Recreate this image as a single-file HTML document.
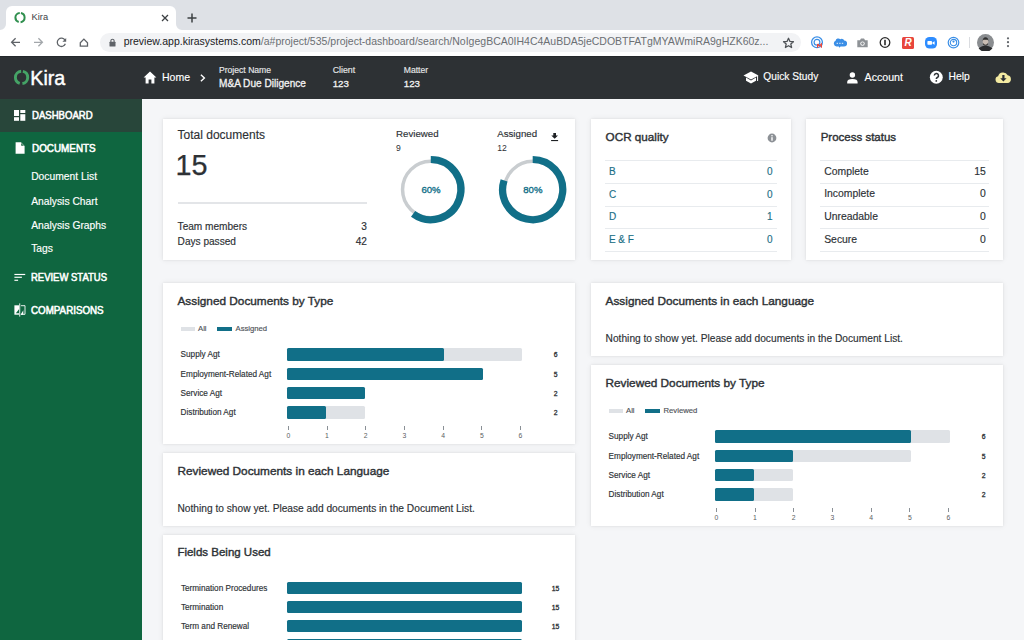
<!DOCTYPE html>
<html><head><meta charset="utf-8">
<style>
*{box-sizing:border-box;margin:0;padding:0}
html,body{width:1024px;height:640px;overflow:hidden;background:#f5f6f8;font-family:"Liberation Sans",sans-serif;color:#2d3135}
.abs{position:absolute}
.t{position:absolute;white-space:nowrap;line-height:1;-webkit-text-stroke:0.15px currentColor}
.card{position:absolute;background:#fff;box-shadow:0 0 6px rgba(0,0,0,.07),0 0 2px rgba(0,0,0,.08)}
</style></head><body>
<div class="abs" style="left:0px;top:0px;width:1024px;height:30px;background:#dee1e6;"></div>
<div class="abs" style="left:6px;top:6px;width:170px;height:24px;background:#fff;border-radius:6px 6px 0 0"></div>
<svg class="abs" style="left:0;top:24px" width="6" height="6"><path d="M0 6 L6 6 L6 0 A6 6 0 0 1 0 6Z" fill="#fff"/></svg>
<svg class="abs" style="left:176px;top:24px" width="6" height="6"><path d="M0 0 L0 6 L6 6 A6 6 0 0 1 0 0Z" fill="#fff"/></svg>
<svg class="abs" style="left:13px;top:11px" width="14" height="14" viewBox="0 0 14 14"><circle cx="7" cy="6.6" r="4.6" fill="none" stroke="#2f8f4e" stroke-width="2" stroke-dasharray="12.5 1.95" stroke-dashoffset="-0.97" transform="rotate(-90 7 6.6)"/></svg>
<div class="t" style="left:31.60px;top:12.89px;font-size:9.3px;font-weight:400;color:#3c4043;-webkit-text-stroke:0">Kira</div>
<svg class="abs" style="left:160px;top:13px" width="10" height="10" viewBox="0 0 10 10"><path d="M2 2L8 8M8 2L2 8" stroke="#3c4043" stroke-width="1.3"/></svg>
<svg class="abs" style="left:186px;top:12px" width="12" height="12" viewBox="0 0 12 12"><path d="M6 1.5V10.5M1.5 6H10.5" stroke="#3c4043" stroke-width="1.5"/></svg>
<div class="abs" style="left:0px;top:30px;width:1024px;height:26px;background:#fff;"></div>
<div class="abs" style="left:100px;top:33px;width:701px;height:18.7px;background:#f2f3f5;border-radius:9.4px"></div>
<svg class="abs" style="left:0;top:0" width="100" height="56"><path d="M20 42.3H11.8M15.6 38.3L11.6 42.3L15.6 46.3" stroke="#5f6368" stroke-width="1.3" fill="none"/><path d="M34 42.3H42.2M38.4 38.3L42.4 42.3L38.4 46.3" stroke="#a3a7ab" stroke-width="1.3" fill="none"/><path d="M65 40.2A4.15 4.15 0 1 0 65.35 43.7" stroke="#5f6368" stroke-width="1.3" fill="none"/><path d="M66.2 37.9V41.7H62.4Z" fill="#5f6368"/><path d="M80.3 42.8L83.9 39.1L87.5 42.8V46.2H80.3Z" stroke="#5f6368" stroke-width="1.3" fill="none" stroke-linejoin="miter"/></svg>
<svg class="abs" style="left:109px;top:38px" width="7" height="9" viewBox="0 0 7 9"><path d="M1.9 4V2.8A1.6 1.6 0 0 1 5.1 2.8V4" stroke="#5f6368" stroke-width="1.1" fill="none"/><rect x="0.5" y="3.7" width="6" height="4.8" rx="0.5" fill="#5f6368"/></svg>
<div class="t" style="left:123.70px;top:36.48px;font-size:10.5px;font-weight:400;color:#6b6f73;-webkit-text-stroke:0"><span style="color:#202124">preview.app.kirasystems.com</span>/a#project/535/project-dashboard/search/NoIgegBCA0IH4C4AuBDA5jeCDOBTFATgMYAWmiRA9gHZK60z...</div>
<svg class="abs" style="left:782px;top:37px" width="13" height="12" viewBox="0 0 24 22"><path d="M12 2.2l2.7 5.9 6.4.6-4.8 4.3 1.4 6.3L12 16l-5.7 3.3 1.4-6.3-4.8-4.3 6.4-.6z" stroke="#4f5357" stroke-width="2.4" fill="none" stroke-linejoin="round"/></svg>
<svg class="abs" style="left:810px;top:36px" width="14" height="13" viewBox="0 0 14 13"><circle cx="7" cy="6.3" r="5.4" fill="none" stroke="#3a8ee6" stroke-width="1.3"/><circle cx="7" cy="6.3" r="2.9" fill="none" stroke="#3a8ee6" stroke-width="1.2"/><path d="M7.6 8V11.7M7.6 8L9.5 10L11.4 8V11.7" stroke="#e8453c" stroke-width="1.2" fill="none"/></svg>
<svg class="abs" style="left:833px;top:37px" width="14" height="11" viewBox="0 0 14 11"><path d="M3.5 9.5A3 3 0 0 1 2.6 3.8 2.8 2.8 0 0 1 7.3 2.2 2.7 2.7 0 0 1 11.2 3.5 3 3 0 0 1 11 9.5H7.5L6.5 10.8 5.8 9.5Z" fill="#3a8ee6"/><path d="M3.6 6.3H5M6.2 6.3H7.6M8.8 6.3H10.2" stroke="#fff" stroke-width="0.9"/></svg>
<svg class="abs" style="left:857px;top:38px" width="11" height="10" viewBox="0 0 11 10"><path d="M0.3 2.2H2.9L4 0.5H7L8.1 2.2H10.7V9.3H0.3Z" fill="#8e9296"/><circle cx="5.5" cy="5.6" r="2.2" fill="#fff"/><circle cx="5.5" cy="5.6" r="1.3" fill="#8e9296"/></svg>
<svg class="abs" style="left:879px;top:37px" width="12" height="11" viewBox="0 0 12 11"><circle cx="6" cy="5.5" r="4.8" fill="none" stroke="#2b2b2b" stroke-width="1.3"/><rect x="5.2" y="2.8" width="1.6" height="5.4" fill="#2b2b2b"/></svg>
<div class="abs" style="left:902px;top:37px;width:12px;height:11.5px;background:#e8453c;border-radius:1.5px;color:#fff;font:italic 700 10px/11.5px 'Liberation Sans';text-align:center">R</div>
<svg class="abs" style="left:925px;top:37px" width="12" height="12" viewBox="0 0 12 12"><rect x="0" y="0" width="12" height="11.5" rx="4.5" fill="#2d8cff"/><rect x="2.4" y="4" width="4.6" height="3.8" rx="0.7" fill="#fff"/><path d="M7.4 5.4L9.6 4.2V7.7L7.4 6.5Z" fill="#fff"/></svg>
<svg class="abs" style="left:947px;top:36px" width="13" height="13" viewBox="0 0 13 13"><circle cx="6.5" cy="6.6" r="5.3" fill="none" stroke="#3a8ee6" stroke-width="1.2"/><circle cx="6.5" cy="6.6" r="3.2" fill="none" stroke="#3a8ee6" stroke-width="1.1"/><circle cx="6.5" cy="5.6" r="1.1" fill="#3a8ee6"/></svg>
<div class="abs" style="left:969px;top:37px;width:1px;height:11px;background:#dadce0;"></div>
<svg class="abs" style="left:977px;top:34px" width="17" height="17" viewBox="0 0 16 16"><circle cx="8" cy="8" r="8" fill="#8a8d90"/><path d="M1.5 13.5Q8 8 14.5 13.5A8 8 0 0 1 1.5 13.5Z" fill="#2a2c2e"/><ellipse cx="8" cy="7.3" rx="2.6" ry="3.3" fill="#c9bdb3"/><path d="M5.3 6.5Q5.5 3 8 3Q10.6 3 10.7 6.5L10 5.4H6Z" fill="#2f2f2f"/><path d="M5.6 8.5Q8 11.8 10.4 8.5V9.8Q8 12.2 5.6 9.8Z" fill="#3a3a3a"/></svg>
<svg class="abs" style="left:1005px;top:36px" width="6" height="13" viewBox="0 0 6 13"><circle cx="3" cy="2.3" r="1.1" fill="#5f6368"/><circle cx="3" cy="6.2" r="1.1" fill="#5f6368"/><circle cx="3" cy="10.1" r="1.1" fill="#5f6368"/></svg>
<div class="abs" style="left:0px;top:56px;width:1024px;height:43px;background:#2d3134;"></div>
<div class="abs" style="left:0px;top:56px;width:1024px;height:1px;background:#24282b;"></div>
<svg class="abs" style="left:13px;top:69px" width="17" height="17" viewBox="0 0 17 17"><circle cx="8.55" cy="8.4" r="6.15" fill="none" stroke="#45a366" stroke-width="2.9" stroke-dasharray="16.52 2.8" stroke-dashoffset="-1.4" transform="rotate(-90 8.55 8.4)"/></svg>
<div class="t" style="left:30.30px;top:68.66px;font-size:19.7px;font-weight:400;color:#fff;-webkit-text-stroke:0.4px #fff">Kira</div>
<svg class="abs" style="left:143px;top:71px" width="14" height="13" viewBox="0 0 14 13"><path d="M7 0.6L0.6 6.4H2.6V12.4H5.6V8.6H8.4V12.4H11.4V6.4H13.4Z" fill="#fff"/></svg>
<div class="t" style="left:162.00px;top:72.08px;font-size:10.5px;font-weight:400;color:#fff;">Home</div>
<svg class="abs" style="left:199px;top:73px" width="8" height="10" viewBox="0 0 8 10"><path d="M1.9 1.7L5.4 5L1.9 8.3" stroke="#fff" stroke-width="1.4" fill="none"/></svg>
<div class="t" style="left:219.00px;top:65.89px;font-size:8.6px;font-weight:400;color:#e6e7e8;">Project Name</div>
<div class="t" style="left:219.00px;top:79.32px;font-size:10.1px;font-weight:400;color:#f2f2f2;-webkit-text-stroke:0.3px #f2f2f2">M&amp;A Due Diligence</div>
<div class="t" style="left:332.70px;top:65.82px;font-size:8.8px;font-weight:400;color:#e6e7e8;">Client</div>
<div class="t" style="left:332.70px;top:79.45px;font-size:9.7px;font-weight:400;color:#f2f2f2;-webkit-text-stroke:0.3px #f2f2f2">123</div>
<div class="t" style="left:403.80px;top:65.99px;font-size:8.6px;font-weight:400;color:#e6e7e8;">Matter</div>
<div class="t" style="left:403.80px;top:79.45px;font-size:9.7px;font-weight:400;color:#f2f2f2;-webkit-text-stroke:0.3px #f2f2f2">123</div>
<svg class="abs" style="left:743px;top:71px" width="16" height="13" viewBox="0 0 16 13"><path d="M8 0.5L0.5 4.5L8 8.5L15.5 4.5Z" fill="#fff"/><path d="M3 6.6V9.7L8 12.5L13 9.7V6.6L8 9.4Z" fill="#fff"/><path d="M14.6 5V10" stroke="#fff" stroke-width="1"/></svg>
<div class="t" style="left:763.30px;top:72.03px;font-size:10.2px;font-weight:400;color:#fff;">Quick Study</div>
<svg class="abs" style="left:846px;top:72px" width="13" height="12" viewBox="0 0 13 12"><circle cx="6.4" cy="3" r="2.7" fill="#fff"/><path d="M1.2 11.4V10.1Q1.2 7.1 6.4 7.1Q11.6 7.1 11.6 10.1V11.4Z" fill="#fff"/></svg>
<div class="t" style="left:864.60px;top:71.89px;font-size:10.6px;font-weight:400;color:#fff;">Account</div>
<svg class="abs" style="left:929px;top:70px" width="15" height="15" viewBox="0 0 15 15"><circle cx="7.3" cy="7.3" r="6.45" fill="#fff"/><path d="M5.3 5.6A2.1 2.1 0 1 1 8.3 7.5C7.6 7.9 7.3 8.2 7.3 9.1" stroke="#2d3135" stroke-width="1.5" fill="none"/><circle cx="7.3" cy="10.9" r="0.9" fill="#2d3135"/></svg>
<div class="t" style="left:948.60px;top:72.34px;font-size:10.3px;font-weight:400;color:#fff;">Help</div>
<svg class="abs" style="left:995px;top:71px" width="17" height="13" viewBox="0 0 17 13"><path d="M4 12A3.4 3.4 0 0 1 3.1 5.3 5.2 5.2 0 0 1 12.7 4.3 3.9 3.9 0 0 1 12.6 12Z" fill="#f4eba2"/><path d="M7.3 4H9.5V7.3H11.6L8.4 10.4L5.2 7.3H7.3Z" fill="#2d3135"/></svg>
<div class="abs" style="left:0px;top:99px;width:142px;height:541px;background:#0f6640;"></div>
<div class="abs" style="left:0px;top:99px;width:142px;height:33px;background:#28463a;"></div>
<svg class="abs" style="left:14px;top:110px" width="12" height="11" viewBox="0 0 12 11"><rect x="0" y="0" width="5" height="6" fill="#fff"/><rect x="6.3" y="0" width="5" height="3" fill="#fff"/><rect x="0" y="7.2" width="5" height="3.6" fill="#fff"/><rect x="6.3" y="4.2" width="5" height="6.6" fill="#fff"/></svg>
<div class="t" style="left:31.70px;top:111.05px;font-size:10.3px;font-weight:400;color:#fff;-webkit-text-stroke:0.55px #fff;transform:scaleX(0.93);transform-origin:0 0">DASHBOARD</div>
<svg class="abs" style="left:15px;top:142px" width="10" height="12" viewBox="0 0 10 12"><path d="M0.6 0.3H6L9.6 3.9V11.7H0.6Z" fill="#fff"/><path d="M6.2 0.9V3.7H9" fill="#1f6b46"/></svg>
<div class="t" style="left:31.70px;top:143.84px;font-size:10.3px;font-weight:400;color:#fff;-webkit-text-stroke:0.55px #fff;transform:scaleX(0.96);transform-origin:0 0">DOCUMENTS</div>
<div class="t" style="left:31.20px;top:171.84px;font-size:10.3px;font-weight:400;color:#fff;">Document List</div>
<div class="t" style="left:31.20px;top:196.55px;font-size:10.3px;font-weight:400;color:#fff;">Analysis Chart</div>
<div class="t" style="left:31.20px;top:220.55px;font-size:10.3px;font-weight:400;color:#fff;">Analysis Graphs</div>
<div class="t" style="left:31.20px;top:244.44px;font-size:10.3px;font-weight:400;color:#fff;">Tags</div>
<svg class="abs" style="left:14px;top:273px" width="12" height="9" viewBox="0 0 12 9"><rect x="0.4" y="0.9" width="10.8" height="1.15" fill="#fff"/><rect x="0.4" y="3.7" width="7.5" height="1.15" fill="#fff"/><rect x="0.4" y="6.7" width="3.7" height="1.15" fill="#fff"/></svg>
<div class="t" style="left:31.20px;top:273.44px;font-size:10.3px;font-weight:400;color:#fff;-webkit-text-stroke:0.55px #fff;transform:scaleX(0.92);transform-origin:0 0">REVIEW STATUS</div>
<svg class="abs" style="left:14px;top:303px" width="12" height="14" viewBox="0 0 12 14"><path d="M0.4 2.3H5V11.7H0.4Z" fill="#fff"/><path d="M1.8 10.3L5 6.2V10.3Z" fill="#0f6640"/><rect x="5.3" y="0.4" width="0.9" height="13.2" fill="#fff"/><path d="M6.9 2.7H11V11.3H6.9" fill="none" stroke="#fff" stroke-width="0.9"/><path d="M6.6 11.7L9.3 7.2V11.7Z" fill="#fff"/></svg>
<div class="t" style="left:31.20px;top:306.05px;font-size:10.3px;font-weight:400;color:#fff;-webkit-text-stroke:0.55px #fff;transform:scaleX(0.95);transform-origin:0 0">COMPARISONS</div>
<div class="abs" style="left:142px;top:99px;width:882px;height:541px;background:#f5f6f8;"></div>
<div class="card" style="left:163px;top:119px;width:412px;height:141px"></div>
<div class="card" style="left:591px;top:119px;width:200px;height:141px"></div>
<div class="card" style="left:806px;top:119px;width:197px;height:141px"></div>
<div class="card" style="left:163px;top:283px;width:412px;height:161px"></div>
<div class="card" style="left:591px;top:283px;width:412px;height:73px"></div>
<div class="card" style="left:591px;top:365px;width:412px;height:161px"></div>
<div class="card" style="left:163px;top:453px;width:412px;height:73px"></div>
<div class="card" style="left:163px;top:535px;width:412px;height:120px"></div>
<div class="t" style="left:177.60px;top:128.70px;font-size:12px;font-weight:400;color:#2d3135;">Total documents</div>
<div class="t" style="left:175.50px;top:150.52px;font-size:28.8px;font-weight:400;color:#2d3135;-webkit-text-stroke:0.25px #2d3135">15</div>
<div class="abs" style="left:177.6px;top:202px;width:189.3px;height:2px;background:#e3e5e8;"></div>
<div class="t" style="left:177.60px;top:221.91px;font-size:10.1px;font-weight:400;color:#2d3135;">Team members</div>
<div class="t" style="right:657.10px;top:221.91px;font-size:10.1px;font-weight:400;color:#2d3135;">3</div>
<div class="t" style="left:177.60px;top:236.91px;font-size:10.1px;font-weight:400;color:#2d3135;">Days passed</div>
<div class="t" style="right:657.10px;top:236.91px;font-size:10.1px;font-weight:400;color:#2d3135;">42</div>
<div class="t" style="left:396.00px;top:129.06px;font-size:9.7px;font-weight:400;color:#2d3135;">Reviewed</div>
<div class="t" style="left:396.00px;top:143.69px;font-size:8.6px;font-weight:400;color:#2d3135;-webkit-text-stroke:0">9</div>
<div class="t" style="left:497.20px;top:129.06px;font-size:9.7px;font-weight:400;color:#2d3135;">Assigned</div>
<div class="t" style="left:497.20px;top:143.69px;font-size:8.6px;font-weight:400;color:#2d3135;-webkit-text-stroke:0">12</div>
<svg class="abs" style="left:550px;top:132px" width="9" height="10" viewBox="0 0 9 10"><path d="M3.3 1H6V3.4H8L4.65 6.8L1.3 3.4H3.3Z" fill="#1e2124"/><rect x="1.1" y="8" width="7" height="1.1" fill="#1e2124"/></svg>
<svg class="abs" style="left:0;top:0" width="1024" height="640"><circle cx="430.8" cy="189.6" r="28.25" fill="none" stroke="#c9cdd0" stroke-width="3.5"/><path d="M430.8 159.5 A30.1 30.1 0 1 1 413.11 213.95" fill="none" stroke="#116f88" stroke-width="7.2"/></svg>
<svg class="abs" style="left:0;top:0" width="1024" height="640"><circle cx="532.7" cy="189.6" r="28.25" fill="none" stroke="#c9cdd0" stroke-width="3.5"/><path d="M532.7 159.5 A30.1 30.1 0 1 1 504.07 180.30" fill="none" stroke="#116f88" stroke-width="7.2"/></svg>
<div class="t" style="left:231.00px;width:400px;text-align:center;top:184.94px;font-size:9.6px;font-weight:400;color:#116f88;-webkit-text-stroke:0.35px #116f88">60%</div>
<div class="t" style="left:332.90px;width:400px;text-align:center;top:184.94px;font-size:9.6px;font-weight:400;color:#116f88;-webkit-text-stroke:0.35px #116f88">80%</div>
<div class="t" style="left:605.60px;top:131.46px;font-size:11.7px;font-weight:400;color:#2d3135;-webkit-text-stroke:0.4px #2d3135">OCR quality</div>
<svg class="abs" style="left:767px;top:133px" width="10" height="10" viewBox="0 0 10 10"><circle cx="5" cy="5" r="4.4" fill="#8d9196"/><rect x="4.3" y="4.2" width="1.4" height="3.5" fill="#fff"/><circle cx="5" cy="2.8" r="0.8" fill="#fff"/></svg>
<div class="abs" style="left:605px;top:160px;width:171.7px;height:1px;background:#e8ebee;"></div>
<div class="abs" style="left:820px;top:160px;width:169px;height:1px;background:#e8ebee;"></div>
<div class="abs" style="left:605px;top:183px;width:171.7px;height:1px;background:#e8ebee;"></div>
<div class="abs" style="left:820px;top:183px;width:169px;height:1px;background:#e8ebee;"></div>
<div class="abs" style="left:605px;top:205.5px;width:171.7px;height:1px;background:#e8ebee;"></div>
<div class="abs" style="left:820px;top:205.5px;width:169px;height:1px;background:#e8ebee;"></div>
<div class="abs" style="left:605px;top:228.3px;width:171.7px;height:1px;background:#e8ebee;"></div>
<div class="abs" style="left:820px;top:228.3px;width:169px;height:1px;background:#e8ebee;"></div>
<div class="abs" style="left:605px;top:251px;width:171.7px;height:1px;background:#e8ebee;"></div>
<div class="abs" style="left:820px;top:251px;width:169px;height:1px;background:#e8ebee;"></div>
<div class="t" style="left:820.70px;top:131.62px;font-size:11.5px;font-weight:400;color:#2d3135;-webkit-text-stroke:0.4px #2d3135">Process status</div>
<div class="t" style="left:608.90px;top:167.00px;font-size:10px;font-weight:400;color:#1b6f86;">B</div>
<div class="t" style="right:251.50px;top:167.00px;font-size:10px;font-weight:400;color:#1b6f86;">0</div>
<div class="t" style="left:608.90px;top:189.70px;font-size:10px;font-weight:400;color:#1b6f86;">C</div>
<div class="t" style="right:251.50px;top:189.70px;font-size:10px;font-weight:400;color:#1b6f86;">0</div>
<div class="t" style="left:608.90px;top:212.40px;font-size:10px;font-weight:400;color:#1b6f86;">D</div>
<div class="t" style="right:251.50px;top:212.40px;font-size:10px;font-weight:400;color:#1b6f86;">1</div>
<div class="t" style="left:608.90px;top:235.10px;font-size:10px;font-weight:400;color:#1b6f86;">E &amp; F</div>
<div class="t" style="right:251.50px;top:235.10px;font-size:10px;font-weight:400;color:#1b6f86;">0</div>
<div class="t" style="left:824.20px;top:166.66px;font-size:10.4px;font-weight:400;color:#2d3135;">Complete</div>
<div class="t" style="right:38.20px;top:166.66px;font-size:10.4px;font-weight:400;color:#2d3135;">15</div>
<div class="t" style="left:824.20px;top:189.36px;font-size:10.4px;font-weight:400;color:#2d3135;">Incomplete</div>
<div class="t" style="right:38.20px;top:189.36px;font-size:10.4px;font-weight:400;color:#2d3135;">0</div>
<div class="t" style="left:824.20px;top:212.06px;font-size:10.4px;font-weight:400;color:#2d3135;">Unreadable</div>
<div class="t" style="right:38.20px;top:212.06px;font-size:10.4px;font-weight:400;color:#2d3135;">0</div>
<div class="t" style="left:824.20px;top:234.76px;font-size:10.4px;font-weight:400;color:#2d3135;">Secure</div>
<div class="t" style="right:38.20px;top:234.76px;font-size:10.4px;font-weight:400;color:#2d3135;">0</div>
<div class="t" style="left:177.50px;top:295.77px;font-size:11.8px;font-weight:400;color:#2d3135;-webkit-text-stroke:0.4px #2d3135">Assigned Documents by Type</div>
<div class="abs" style="left:180.6px;top:327px;width:14.2px;height:4px;background:#dfe2e6;"></div>
<div class="t" style="left:198.00px;top:325.25px;font-size:7.7px;font-weight:400;color:#4e5358;">All</div>
<div class="abs" style="left:217.2px;top:327px;width:14.4px;height:4px;background:#116f88;"></div>
<div class="t" style="left:235.50px;top:325.25px;font-size:7.7px;font-weight:400;color:#4e5358;">Assigned</div>
<div class="t" style="left:180.60px;top:351.33px;font-size:8.2px;font-weight:400;color:#2d3135;">Supply Agt</div>
<div class="abs" style="left:287px;top:348.4px;width:235.2px;height:12.5px;background:#dfe2e6;border-radius:1.5px"></div>
<div class="abs" style="left:287px;top:348.4px;width:156.8px;height:12.5px;background:#116f88;border-radius:1.5px"></div>
<div class="t" style="left:355.60px;width:400px;text-align:center;top:352.42px;font-size:6.8px;font-weight:400;color:#2d3135;-webkit-text-stroke:0.3px #2d3135">6</div>
<div class="t" style="left:180.60px;top:370.53px;font-size:8.2px;font-weight:400;color:#2d3135;">Employment-Related Agt</div>
<div class="abs" style="left:287px;top:367.6px;width:196.0px;height:12.5px;background:#dfe2e6;border-radius:1.5px"></div>
<div class="abs" style="left:287px;top:367.6px;width:196.0px;height:12.5px;background:#116f88;border-radius:1.5px"></div>
<div class="t" style="left:355.60px;width:400px;text-align:center;top:371.62px;font-size:6.8px;font-weight:400;color:#2d3135;-webkit-text-stroke:0.3px #2d3135">5</div>
<div class="t" style="left:180.60px;top:389.73px;font-size:8.2px;font-weight:400;color:#2d3135;">Service Agt</div>
<div class="abs" style="left:287px;top:386.8px;width:78.4px;height:12.5px;background:#dfe2e6;border-radius:1.5px"></div>
<div class="abs" style="left:287px;top:386.8px;width:78.4px;height:12.5px;background:#116f88;border-radius:1.5px"></div>
<div class="t" style="left:355.60px;width:400px;text-align:center;top:390.82px;font-size:6.8px;font-weight:400;color:#2d3135;-webkit-text-stroke:0.3px #2d3135">2</div>
<div class="t" style="left:180.60px;top:408.93px;font-size:8.2px;font-weight:400;color:#2d3135;">Distribution Agt</div>
<div class="abs" style="left:287px;top:406.0px;width:78.4px;height:12.5px;background:#dfe2e6;border-radius:1.5px"></div>
<div class="abs" style="left:287px;top:406.0px;width:39.2px;height:12.5px;background:#116f88;border-radius:1.5px"></div>
<div class="t" style="left:355.60px;width:400px;text-align:center;top:410.02px;font-size:6.8px;font-weight:400;color:#2d3135;-webkit-text-stroke:0.3px #2d3135">2</div>
<div class="abs" style="left:287.9px;top:425.79999999999995px;width:0.8px;height:4px;background:#8a9096;"></div>
<div class="t" style="left:88.30px;width:400px;text-align:center;top:432.92px;font-size:6.8px;font-weight:400;color:#5a5e62;-webkit-text-stroke:0">0</div>
<div class="abs" style="left:326.6px;top:425.79999999999995px;width:0.8px;height:4px;background:#8a9096;"></div>
<div class="t" style="left:127.00px;width:400px;text-align:center;top:432.92px;font-size:6.8px;font-weight:400;color:#5a5e62;-webkit-text-stroke:0">1</div>
<div class="abs" style="left:365.3px;top:425.79999999999995px;width:0.8px;height:4px;background:#8a9096;"></div>
<div class="t" style="left:165.70px;width:400px;text-align:center;top:432.92px;font-size:6.8px;font-weight:400;color:#5a5e62;-webkit-text-stroke:0">2</div>
<div class="abs" style="left:404.0px;top:425.79999999999995px;width:0.8px;height:4px;background:#8a9096;"></div>
<div class="t" style="left:204.40px;width:400px;text-align:center;top:432.92px;font-size:6.8px;font-weight:400;color:#5a5e62;-webkit-text-stroke:0">3</div>
<div class="abs" style="left:442.7px;top:425.79999999999995px;width:0.8px;height:4px;background:#8a9096;"></div>
<div class="t" style="left:243.10px;width:400px;text-align:center;top:432.92px;font-size:6.8px;font-weight:400;color:#5a5e62;-webkit-text-stroke:0">4</div>
<div class="abs" style="left:481.4px;top:425.79999999999995px;width:0.8px;height:4px;background:#8a9096;"></div>
<div class="t" style="left:281.80px;width:400px;text-align:center;top:432.92px;font-size:6.8px;font-weight:400;color:#5a5e62;-webkit-text-stroke:0">5</div>
<div class="abs" style="left:520.1px;top:425.79999999999995px;width:0.8px;height:4px;background:#8a9096;"></div>
<div class="t" style="left:320.50px;width:400px;text-align:center;top:432.92px;font-size:6.8px;font-weight:400;color:#5a5e62;-webkit-text-stroke:0">6</div>
<div class="t" style="left:605.50px;top:377.77px;font-size:11.8px;font-weight:400;color:#2d3135;-webkit-text-stroke:0.4px #2d3135">Reviewed Documents by Type</div>
<div class="abs" style="left:608.6px;top:409px;width:14.2px;height:4px;background:#dfe2e6;"></div>
<div class="t" style="left:626.00px;top:407.25px;font-size:7.7px;font-weight:400;color:#4e5358;">All</div>
<div class="abs" style="left:645.2px;top:409px;width:14.4px;height:4px;background:#116f88;"></div>
<div class="t" style="left:663.50px;top:407.25px;font-size:7.7px;font-weight:400;color:#4e5358;">Reviewed</div>
<div class="t" style="left:608.60px;top:433.33px;font-size:8.2px;font-weight:400;color:#2d3135;">Supply Agt</div>
<div class="abs" style="left:715px;top:430.4px;width:235.2px;height:12.5px;background:#dfe2e6;border-radius:1.5px"></div>
<div class="abs" style="left:715px;top:430.4px;width:196.0px;height:12.5px;background:#116f88;border-radius:1.5px"></div>
<div class="t" style="left:783.60px;width:400px;text-align:center;top:434.42px;font-size:6.8px;font-weight:400;color:#2d3135;-webkit-text-stroke:0.3px #2d3135">6</div>
<div class="t" style="left:608.60px;top:452.53px;font-size:8.2px;font-weight:400;color:#2d3135;">Employment-Related Agt</div>
<div class="abs" style="left:715px;top:449.6px;width:196.0px;height:12.5px;background:#dfe2e6;border-radius:1.5px"></div>
<div class="abs" style="left:715px;top:449.6px;width:78.4px;height:12.5px;background:#116f88;border-radius:1.5px"></div>
<div class="t" style="left:783.60px;width:400px;text-align:center;top:453.62px;font-size:6.8px;font-weight:400;color:#2d3135;-webkit-text-stroke:0.3px #2d3135">5</div>
<div class="t" style="left:608.60px;top:471.73px;font-size:8.2px;font-weight:400;color:#2d3135;">Service Agt</div>
<div class="abs" style="left:715px;top:468.8px;width:78.4px;height:12.5px;background:#dfe2e6;border-radius:1.5px"></div>
<div class="abs" style="left:715px;top:468.8px;width:39.2px;height:12.5px;background:#116f88;border-radius:1.5px"></div>
<div class="t" style="left:783.60px;width:400px;text-align:center;top:472.82px;font-size:6.8px;font-weight:400;color:#2d3135;-webkit-text-stroke:0.3px #2d3135">2</div>
<div class="t" style="left:608.60px;top:490.93px;font-size:8.2px;font-weight:400;color:#2d3135;">Distribution Agt</div>
<div class="abs" style="left:715px;top:488.0px;width:78.4px;height:12.5px;background:#dfe2e6;border-radius:1.5px"></div>
<div class="abs" style="left:715px;top:488.0px;width:39.2px;height:12.5px;background:#116f88;border-radius:1.5px"></div>
<div class="t" style="left:783.60px;width:400px;text-align:center;top:492.02px;font-size:6.8px;font-weight:400;color:#2d3135;-webkit-text-stroke:0.3px #2d3135">2</div>
<div class="abs" style="left:715.9px;top:507.79999999999995px;width:0.8px;height:4px;background:#8a9096;"></div>
<div class="t" style="left:516.30px;width:400px;text-align:center;top:514.92px;font-size:6.8px;font-weight:400;color:#5a5e62;-webkit-text-stroke:0">0</div>
<div class="abs" style="left:754.6px;top:507.79999999999995px;width:0.8px;height:4px;background:#8a9096;"></div>
<div class="t" style="left:555.00px;width:400px;text-align:center;top:514.92px;font-size:6.8px;font-weight:400;color:#5a5e62;-webkit-text-stroke:0">1</div>
<div class="abs" style="left:793.3px;top:507.79999999999995px;width:0.8px;height:4px;background:#8a9096;"></div>
<div class="t" style="left:593.70px;width:400px;text-align:center;top:514.92px;font-size:6.8px;font-weight:400;color:#5a5e62;-webkit-text-stroke:0">2</div>
<div class="abs" style="left:832.0px;top:507.79999999999995px;width:0.8px;height:4px;background:#8a9096;"></div>
<div class="t" style="left:632.40px;width:400px;text-align:center;top:514.92px;font-size:6.8px;font-weight:400;color:#5a5e62;-webkit-text-stroke:0">3</div>
<div class="abs" style="left:870.7px;top:507.79999999999995px;width:0.8px;height:4px;background:#8a9096;"></div>
<div class="t" style="left:671.10px;width:400px;text-align:center;top:514.92px;font-size:6.8px;font-weight:400;color:#5a5e62;-webkit-text-stroke:0">4</div>
<div class="abs" style="left:909.4px;top:507.79999999999995px;width:0.8px;height:4px;background:#8a9096;"></div>
<div class="t" style="left:709.80px;width:400px;text-align:center;top:514.92px;font-size:6.8px;font-weight:400;color:#5a5e62;-webkit-text-stroke:0">5</div>
<div class="abs" style="left:948.1px;top:507.79999999999995px;width:0.8px;height:4px;background:#8a9096;"></div>
<div class="t" style="left:748.50px;width:400px;text-align:center;top:514.92px;font-size:6.8px;font-weight:400;color:#5a5e62;-webkit-text-stroke:0">6</div>
<div class="t" style="left:605.60px;top:295.77px;font-size:11.8px;font-weight:400;color:#2d3135;-webkit-text-stroke:0.4px #2d3135">Assigned Documents in each Language</div>
<div class="t" style="left:605.60px;top:333.53px;font-size:10.2px;font-weight:400;color:#2d3135;">Nothing to show yet. Please add documents in the Document List.</div>
<div class="t" style="left:177.50px;top:465.57px;font-size:11.8px;font-weight:400;color:#2d3135;-webkit-text-stroke:0.4px #2d3135">Reviewed Documents in each Language</div>
<div class="t" style="left:177.50px;top:503.53px;font-size:10.2px;font-weight:400;color:#2d3135;">Nothing to show yet. Please add documents in the Document List.</div>
<div class="t" style="left:177.40px;top:547.33px;font-size:11.5px;font-weight:400;color:#2d3135;-webkit-text-stroke:0.4px #2d3135">Fields Being Used</div>
<div class="t" style="left:180.90px;top:584.53px;font-size:8.2px;font-weight:400;color:#2d3135;">Termination Procedures</div>
<div class="abs" style="left:287.2px;top:581.8px;width:234.6px;height:12.3px;background:#116f88;border-radius:1.5px"></div>
<div class="t" style="left:355.60px;width:400px;text-align:center;top:585.62px;font-size:6.8px;font-weight:400;color:#2d3135;-webkit-text-stroke:0.3px #2d3135">15</div>
<div class="t" style="left:180.90px;top:603.73px;font-size:8.2px;font-weight:400;color:#2d3135;">Termination</div>
<div class="abs" style="left:287.2px;top:601.0px;width:234.6px;height:12.3px;background:#116f88;border-radius:1.5px"></div>
<div class="t" style="left:355.60px;width:400px;text-align:center;top:604.82px;font-size:6.8px;font-weight:400;color:#2d3135;-webkit-text-stroke:0.3px #2d3135">15</div>
<div class="t" style="left:180.90px;top:622.93px;font-size:8.2px;font-weight:400;color:#2d3135;">Term and Renewal</div>
<div class="abs" style="left:287.2px;top:620.2px;width:234.6px;height:12.3px;background:#116f88;border-radius:1.5px"></div>
<div class="t" style="left:355.60px;width:400px;text-align:center;top:624.02px;font-size:6.8px;font-weight:400;color:#2d3135;-webkit-text-stroke:0.3px #2d3135">15</div>
<div class="t" style="left:180.90px;top:642.13px;font-size:8.2px;font-weight:400;color:#2d3135;">Assignment</div>
<div class="abs" style="left:287.2px;top:639.4px;width:234.6px;height:12.3px;background:#116f88;border-radius:1.5px"></div>
<div class="t" style="left:355.60px;width:400px;text-align:center;top:643.22px;font-size:6.8px;font-weight:400;color:#2d3135;-webkit-text-stroke:0.3px #2d3135">15</div>
</body></html>
